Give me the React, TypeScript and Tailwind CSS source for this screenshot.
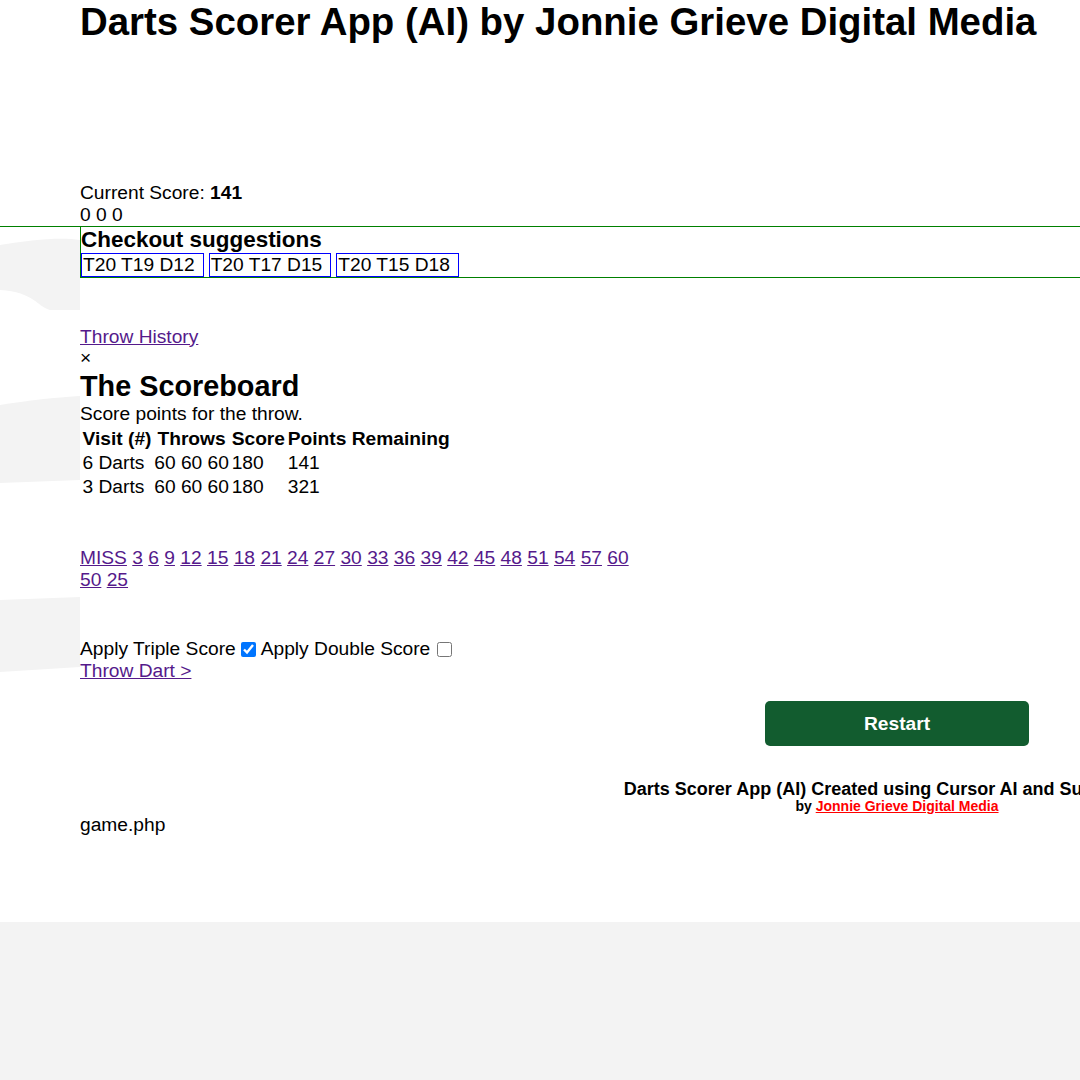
import React from 'react';

// Score buttons for the current dart (triples of 1-20 plus bull values)
const tripleScores: string[] = [
  'MISS', '3', '6', '9', '12', '15', '18', '21', '24', '27', '30',
  '33', '36', '39', '42', '45', '48', '51', '54', '57', '60',
];

const suggestions: string[] = ['T20 T19 D12', 'T20 T17 D15', 'T20 T15 D18'];

const history = [
  { visit: '6 Darts', throws: '60 60 60', score: '180', remaining: '141' },
  { visit: '3 Darts', throws: '60 60 60', score: '180', remaining: '321' },
];

const linkCls = 'text-[#551a8b] underline';
const thCls = 'pl-[0.5px] pr-[0.25px] py-[1px] text-center font-bold leading-[20px]';
const tdCls = 'pl-[0.5px] pr-[0.25px] py-[1px] leading-[20px]';

const App: React.FC = () => {
  return (
    <div className="min-h-screen w-full overflow-hidden bg-[#f3f3f3] text-black">
      <div className="relative h-[922px] bg-white font-['Liberation_Sans',Arial,sans-serif] text-[19.2px] leading-[21.5px]">
        {/* faint brush strokes of the page background, left margin */}
        <svg className="pointer-events-none absolute left-0 top-0" width="80" height="922" viewBox="0 0 80 922">
          <path d="M0,245 C30,240 60,237 80,240 L80,310 L50,310 C38,307 34,292 0,290 Z" fill="#f3f3f3" />
          <path d="M0,405 C30,400 60,397 80,396 L80,480 L0,483 Z" fill="#f3f3f3" />
          <path d="M0,600 L80,597 L80,667 L0,672 Z" fill="#f3f3f3" />
        </svg>

        <div className="relative">
          <h1 className="whitespace-nowrap pl-[80px] text-[38.4px] font-bold leading-[44px]">
            Darts Scorer App (AI) by Jonnie Grieve Digital Media
          </h1>

          <div className="mt-[138px] pl-[80px]">
            <div>
              Current Score: <b>141</b>
            </div>
            <div>0 0 0</div>
          </div>

          <div className="mt-[1px] border-t border-[#008000]">
            <div className="ml-[80px] border-b border-l border-[#008000]">
              <h3 className="text-[22.46px] font-bold leading-[26px]">Checkout suggestions</h3>
              <div className="flex gap-[5px]">
                {suggestions.map((s) => (
                  <span key={s} className="inline-block border border-[#0000ff] pl-[1px] pr-[8px] leading-[21.5px] whitespace-nowrap">
                    {s}
                  </span>
                ))}
              </div>
            </div>
          </div>

          <div className="mt-[48px] pl-[80px]">
            <a href="#" className={linkCls}>Throw History</a>
            <div>×</div>
            <h2 className="pt-[1px] text-[28.8px] font-bold leading-[33px]">The Scoreboard</h2>
            <p>Score points for the throw.</p>
            <table className="mt-[2px] border-separate border-spacing-[2px]">
              <thead>
                <tr>
                  <th className={thCls}>Visit (#)</th>
                  <th className={thCls}>Throws</th>
                  <th className={thCls}>Score</th>
                  <th className={thCls}>Points Remaining</th>
                </tr>
              </thead>
              <tbody>
                {history.map((row) => (
                  <tr key={row.visit}>
                    <td className={tdCls}>{row.visit}</td>
                    <td className={tdCls}>{row.throws}</td>
                    <td className={tdCls}>{row.score}</td>
                    <td className={tdCls}>{row.remaining}</td>
                  </tr>
                ))}
              </tbody>
            </table>

            <div className="mt-[47px] leading-[22px]">
              {tripleScores.map((s, i) => (
                <React.Fragment key={s}>
                  {i > 0 && ' '}
                  <a href="#" className={linkCls}>{s}</a>
                </React.Fragment>
              ))}
              <br />
              <a href="#" className={linkCls}>50</a> <a href="#" className={linkCls}>25</a>
            </div>

            <div className="mt-[47px] leading-[22px]">
              <label>
                Apply Triple Score
                <input type="checkbox" defaultChecked className="ml-[5px] mr-[5px] h-[15px] w-[15px] align-[-2px] accent-[#0075ff]" />
              </label>
              <label>
                Apply Double Score
                <input type="checkbox" className="ml-[7px] h-[15px] w-[15px] align-[-2px]" />
              </label>
            </div>
            <div className="leading-[22px]">
              <a href="#" className={linkCls}>Throw Dart &gt;</a>
            </div>
          </div>

          <div className="ml-[625px] mt-[19px] flex w-[544px] flex-col items-center">
            <button className="h-[45px] w-[264px] rounded-[5px] bg-[#125c2f] text-[19.2px] font-bold text-white">
              Restart
            </button>
            <div className="mt-[33px] whitespace-nowrap text-center text-[18px] font-bold leading-[20px]">
              Darts Scorer App (AI) Created using Cursor AI and Sublime Text
            </div>
            <div className="whitespace-nowrap text-center text-[14px] font-bold leading-[15px]">
              by <a href="#" className="text-[#ff0000] underline">Jonnie Grieve Digital Media</a>
            </div>
          </div>

          <div className="pl-[80px]">game.php</div>
        </div>
      </div>
    </div>
  );
};

export default App;
